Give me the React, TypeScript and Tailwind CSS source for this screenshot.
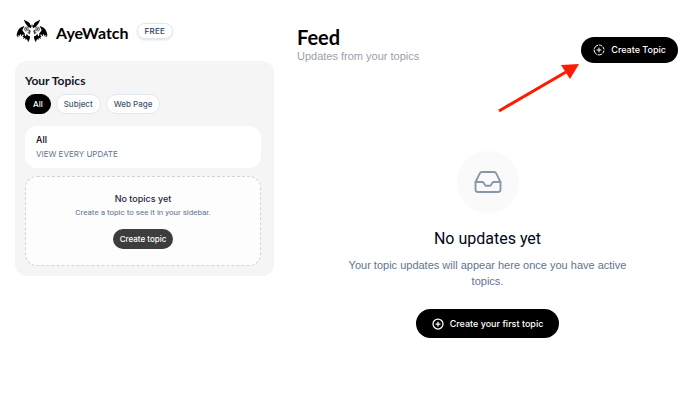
import { CirclePlus, Inbox } from "lucide-react";
import { useState } from "react";

const filters = ["All", "Subject", "Web Page"];

function Wing() {
  return (
    <>
      <path d="M31 21C28 15 22 12 20 1c4 4 10 4 14 9l2 6 2-3c2 4 1 7-1 10-3-2-4-3-6-2Z" />
      <path d="M19 18C10 20 5 26 3 34c-2 4-1 9 0 12l3-8 1 8c1-4 3-7 6-9l-1 7 6-6 3 3 1-5-6-7 2-6 3-4Z" />
      <path d="M16 44l5-5 3 5 3-7 3 5 5 1c0 5-1 10-5 15 0-4-2-6-4-8l-2 3-1-6-5 3 1-5Z" />
      <circle cx="26" cy="25" r="5" fill="#bbb" stroke="#666" strokeWidth="2" />
      <circle cx="26" cy="25" r="2" fill="#333" />
      <path d="M33 26l4 4-3 9-6-5 4-1-1-5Z" fill="#444" />
    </>
  );
}

function Logo() {
  return (
    <svg viewBox="0 0 80 60" className="h-6 w-8 shrink-0" fill="#000" aria-hidden="true">
      <Wing />
      <g transform="translate(80 0) scale(-1 1)">
        <Wing />
      </g>
    </svg>
  );
}

function DashedPlus() {
  return (
    <svg
      viewBox="0 0 24 24"
      className="size-3"
      fill="none"
      stroke="currentColor"
      strokeWidth="2"
      strokeLinecap="round"
      aria-hidden="true"
    >
      <path d="M13 2a10 10 0 0 1 4.5 1.6M20 6a10 10 0 0 1 1.8 4M21.8 14a10 10 0 0 1-1.8 4M17.5 20.4A10 10 0 0 1 10 21.8M7 20.6A10 10 0 0 1 2 12M2.4 9A10 10 0 0 1 9.5 2.3" />
      <path d="M12 8v8M8 12h8" />
    </svg>
  );
}

function Sidebar() {
  const [active, setActive] = useState("All");

  return (
    <aside className="w-[259px] shrink-0">
      <div className="flex h-[61px] items-center pl-px">
        <Logo />
        <span className="ml-2 pt-1 font-['Lato'] text-base font-bold leading-5 text-black">AyeWatch</span>
        <span className="ml-2 rounded-full border border-slate-200 px-[7px] text-[8px] font-semibold leading-[14px] tracking-wide text-slate-600 shadow-sm">
          FREE
        </span>
      </div>
      <div className="rounded-xl bg-[#f5f5f5] py-2.5 pl-2.5 pr-[13px]">
        <h2 className="font-['Lato'] text-xs font-bold leading-5 text-slate-900">Your Topics</h2>
        <div className="mt-[3px] flex gap-[5px]">
          {filters.map((name) => (
            <button
              key={name}
              type="button"
              onClick={() => setActive(name)}
              className={
                name === active
                  ? "h-5 rounded-full border border-black bg-black px-[7px] text-[8px] font-medium text-white"
                  : "h-5 rounded-full border border-slate-200 bg-white px-[7px] text-[8px] font-medium text-slate-600"
              }
            >
              {name}
            </button>
          ))}
        </div>
        <div className="mt-3 rounded-xl bg-white px-[11px] py-2">
          <p className="text-[9px] font-medium leading-3 text-black">All</p>
          <p className="mt-0.5 text-[8px] leading-3 text-slate-500">VIEW EVERY UPDATE</p>
        </div>
        <div className="mt-2 flex flex-col items-center rounded-xl border border-dashed border-[#d4d4d4] bg-[#fdfdfd] px-3 py-4 text-center">
          <p className="text-[9px] font-medium leading-3 text-slate-800">No topics yet</p>
          <p className="mt-0.5 font-['Roboto'] text-[8px] leading-3 text-slate-500">
            Create a topic to see it in your sidebar.
          </p>
          <button type="button" className="mt-2.5 h-5 rounded-full bg-[#3d3d3d] px-[7px] text-[8px] font-medium text-white">
            Create topic
          </button>
        </div>
      </div>
    </aside>
  );
}

function Arrow() {
  return (
    <svg viewBox="0 0 82 50" className="pointer-events-none absolute right-[98px] top-16 h-[50px] w-[82px]" aria-hidden="true">
      <path d="M1 47L68 8" stroke="#ff1a00" strokeWidth="3" />
      <path d="M81 0L63 1L72 15Z" fill="#ff1a00" />
    </svg>
  );
}

export default function App() {
  return (
    <div className="flex bg-white pl-[15px] pr-[22px] font-['Inter',sans-serif]">
      <Sidebar />
      <main className="relative ml-[23px] flex-1">
        <header className="flex items-start justify-between">
          <div className="pt-[25px]">
            <h1 className="font-['Lato'] text-xl font-bold leading-6 text-black">Feed</h1>
            <p className="font-['Liberation_Sans'] text-[11px] leading-[14px] text-[#9ca0aa]">Updates from your topics</p>
          </div>
          <button type="button" className="mt-[37px] flex h-[26px] items-center gap-1.5 rounded-full bg-black px-3 text-[9px] font-medium text-white">
            <DashedPlus />
            Create Topic
          </button>
        </header>
        <Arrow />
        <section className="mt-[88px] flex flex-col items-center text-center">
          <div className="flex size-[62px] items-center justify-center rounded-full bg-[#fafafa]">
            <Inbox size={30} strokeWidth={1.5} className="text-[#8a96ab]" />
          </div>
          <h2 className="mt-4 font-['Roboto'] text-base leading-5 text-slate-950">No updates yet</h2>
          <p className="mt-2 max-w-[280px] font-['Liberation_Sans'] text-[11px] leading-4 text-slate-500">
            Your topic updates will appear here once you have active topics.
          </p>
          <button type="button" className="mt-5 flex h-[29px] items-center gap-1.5 rounded-full bg-black px-4 text-[9px] font-medium text-white">
            <CirclePlus size={12} strokeWidth={2.5} />
            Create your first topic
          </button>
        </section>
      </main>
    </div>
  );
}
